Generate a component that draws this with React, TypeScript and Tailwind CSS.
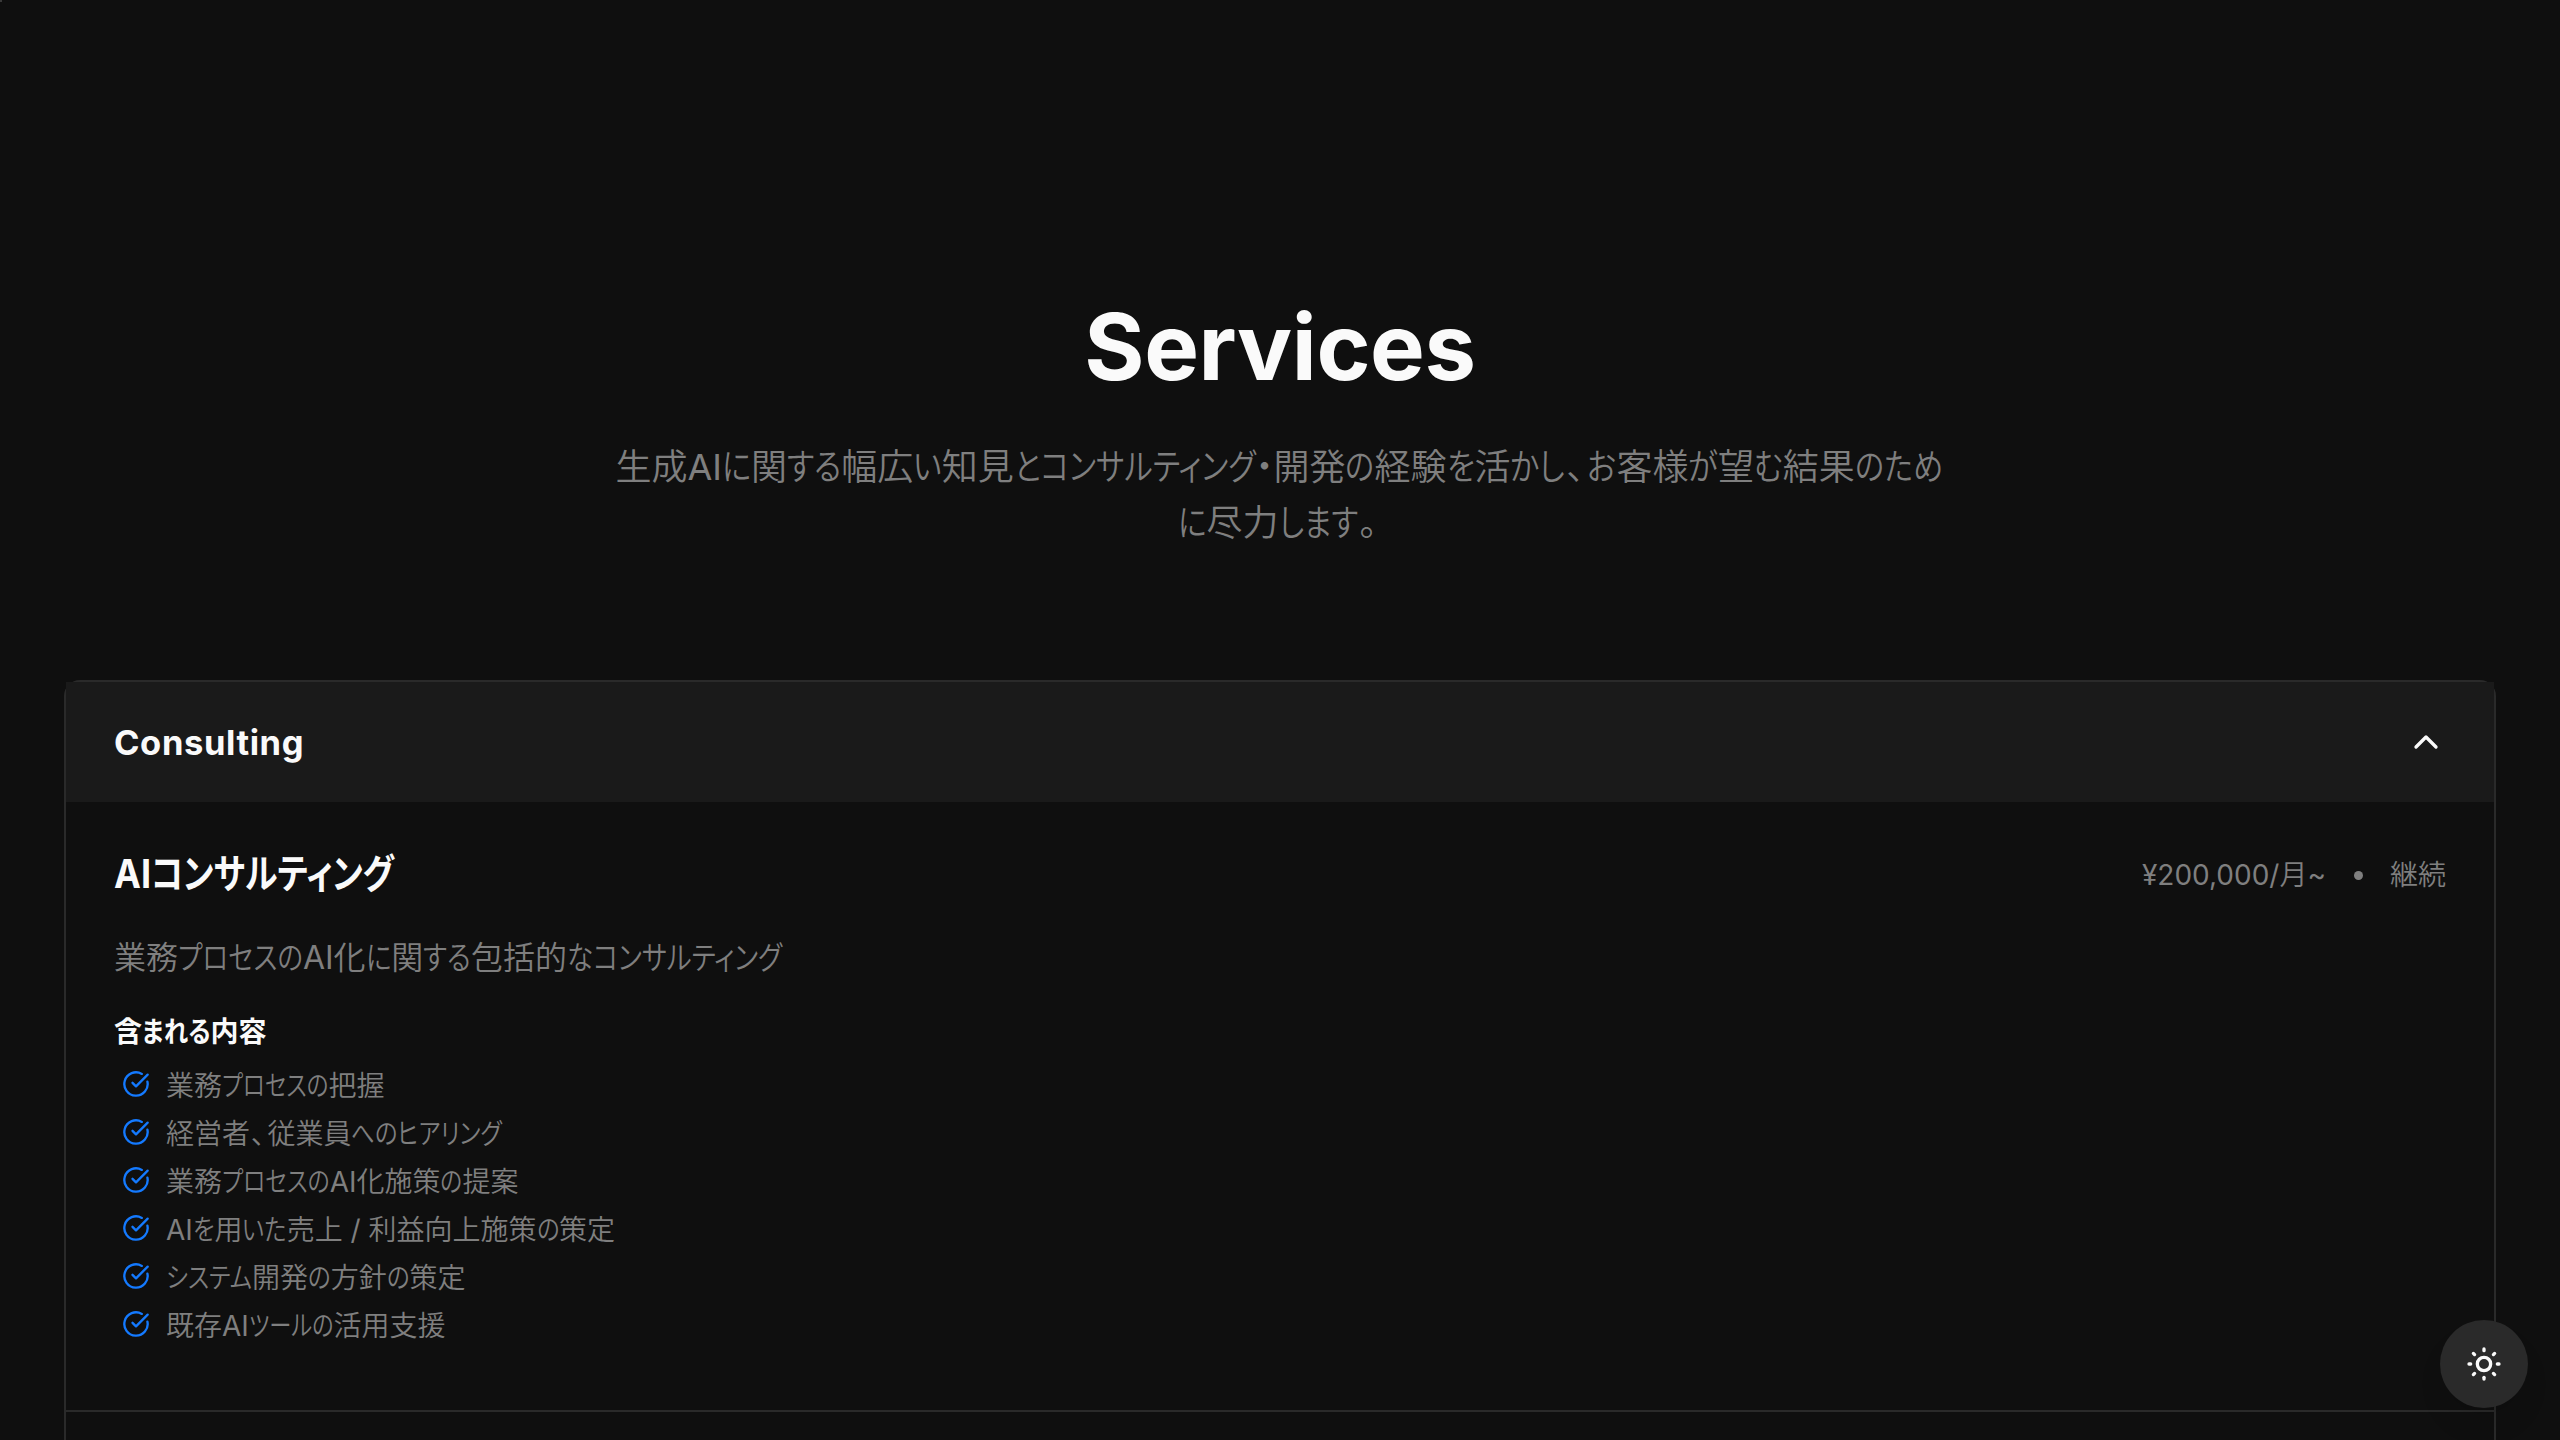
import { useLayoutEffect, useRef, useState } from "react";
import { ChevronUp, CircleCheckBig, SunMedium } from "lucide-react";

const items = [
  { text: "業務プロセスの把握", width: 218.5 },
  { text: "経営者、従業員へのヒアリング", width: 336 },
  { text: "業務プロセスのAI化施策の提案", width: 352.5 },
  { text: "AIを用いた売上 / 利益向上施策の策定", width: 449 },
  { text: "システム開発の方針の策定", width: 299.5 },
  { text: "既存AIツールの活用支援", width: 279.5 },
];

const RUNS = /([ぁ-んァ-ヶー]+|[、。])/;
const KANA = /^[ぁ-んァ-ヶー]/;

/** A line whose kana are condensed so that the whole fits the given width. */
function Line({ text, width }: { text: string; width: number }) {
  const ref = useRef<HTMLSpanElement>(null);
  const [fit, setFit] = useState<{ k: number; widths: number[] } | null>(null);
  const runs = text.split(RUNS).filter(Boolean);

  useLayoutEffect(() => {
    const el = ref.current;
    if (!el || fit) return;
    const total = el.getBoundingClientRect().width;
    const widths = [...el.children].map((c) => c.getBoundingClientRect().width);
    const kana = widths.reduce((sum, w, i) => (KANA.test(runs[i]) ? sum + w : sum), 0);
    setFit({ k: (width - (total - kana)) / kana, widths });
  }, [fit, runs, width]);

  return (
    <span ref={ref} className="inline-block whitespace-pre">
      {runs.map((run, i) => {
        if (KANA.test(run)) {
          const style = fit
            ? { transform: `scaleX(${fit.k})`, marginRight: (fit.k - 1) * fit.widths[i] }
            : undefined;
          return (
            <span key={i} className="inline-block origin-left" style={style}>
              {run}
            </span>
          );
        }
        if (run === "、" || run === "。") {
          return (
            <span key={i} className="inline-block w-[0.62em] pl-[0.04em] text-left">
              {run}
            </span>
          );
        }
        return <span key={i}>{run}</span>;
      })}
    </span>
  );
}

export default function App() {
  return (
    <div className="relative h-[1440px] w-[2560px] overflow-hidden bg-[#0f0f0f] font-['Inter','Noto_Sans_CJK_JP_DemiLight','Noto_Sans_CJK_JP',sans-serif] text-[#fafafa] [font-feature-settings:'palt']">
      <div className="absolute top-0 left-0 size-0.5 bg-[#3a3a3a]" />
      <header className="flex flex-col items-center pt-[299px] text-center">
        <h1 className="text-[92px] leading-[96px] font-bold tracking-[-0.4px]">Services</h1>
        <div className="mt-[44px] mr-0.5 text-[36px] leading-[56px] text-[#7f7f7f]">
          <p>
            <Line
              text="生成AIに関する幅広い知見とコンサルティング・開発の経験を活かし、お客様が望む結果のため"
              width={1327}
            />
          </p>
          <p>
            <Line text="に尽力します。" width={202} />
          </p>
        </div>
      </header>
      <main className="mx-16 mt-[129px] h-[800px] rounded-2xl border-2 border-[#2a2a2a]">
        <div className="flex h-[120px] items-center justify-between bg-[#1a1a1a] px-12">
          <h2 className="pt-px text-[34.5px] leading-10 font-bold tracking-[0.6px]">Consulting</h2>
          <ChevronUp size={40} />
        </div>
        <section className="h-[610px] border-b-2 border-[#2a2a2a] px-12 pt-[44px]">
          <div className="flex h-14 items-center justify-between">
            <h3 className="font-['Inter','Noto_Sans_CJK_JP',sans-serif] text-[40px] leading-[56px] font-bold">
              <span className="-mr-1 inline-block origin-left scale-x-90">AI</span>
              <Line text="コンサルティング" width={243} />
            </h3>
            <div className="flex items-center pt-0.5 text-[28px] leading-10 text-[#7f7f7f]">
              <span>¥200,000/月~</span>
              <span className="mr-[27px] ml-7 size-[9px] rounded-full bg-[#7f7f7f]" />
              <span>継続</span>
            </div>
          </div>
          <p className="mt-[32px] text-[32px] leading-[48px] text-[#7f7f7f]">
            <Line text="業務プロセスのAI化に関する包括的なコンサルティング" width={668} />
          </p>
          <h4 className="mt-[30px] font-['Inter','Noto_Sans_CJK_JP',sans-serif] text-[28px] leading-10 font-bold">
            <Line text="含まれる内容" width={152.5} />
          </h4>
          <ul className="mt-[14px] flex flex-col gap-2 pl-2 text-[28px] leading-10 text-[#7f7f7f]">
            {items.map((item) => (
              <li key={item.text} className="flex h-10 items-center gap-4">
                <CircleCheckBig size={28} className="mb-1 text-[#147aff]" />
                <Line text={item.text} width={item.width} />
              </li>
            ))}
          </ul>
        </section>
      </main>
      <button className="fixed right-8 bottom-8 flex size-[88px] items-center justify-center rounded-full bg-[#2a2a2a] shadow-[0_20px_30px_-6px_rgba(0,0,0,0.1),0_8px_12px_-8px_rgba(0,0,0,0.1)]">
        <SunMedium size={40} />
      </button>
    </div>
  );
}
